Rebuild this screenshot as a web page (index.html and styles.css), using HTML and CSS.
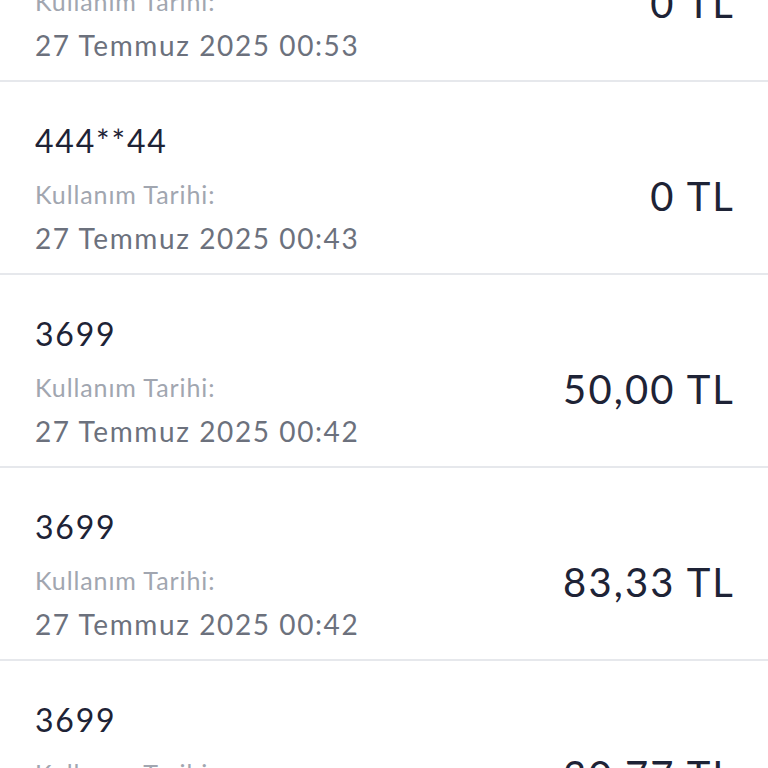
FILE: index.html
```html
<!doctype html>
<html lang="tr">
  <head>
    <meta charset="UTF-8" />
    <meta name="viewport" content="width=device-width, initial-scale=1.0" />
    <title>Kullanım Geçmişi</title>
    <link rel="stylesheet" href="styles.css">
  </head>
  <body>
    <div class="list">
      <div class="row">
        <div class="info">
          <div class="code">3699</div>
          <div class="label">Kullanım Tarihi:</div>
          <div class="date">27 Temmuz 2025 00:53</div>
        </div>
        <div class="amount">0 TL</div>
      </div>

      <div class="row">
        <div class="info">
          <div class="code">444**44</div>
          <div class="label">Kullanım Tarihi:</div>
          <div class="date">27 Temmuz 2025 00:43</div>
        </div>
        <div class="amount">0 TL</div>
      </div>

      <div class="row">
        <div class="info">
          <div class="code">3699</div>
          <div class="label">Kullanım Tarihi:</div>
          <div class="date">27 Temmuz 2025 00:42</div>
        </div>
        <div class="amount">50,00 TL</div>
      </div>

      <div class="row">
        <div class="info">
          <div class="code">3699</div>
          <div class="label">Kullanım Tarihi:</div>
          <div class="date">27 Temmuz 2025 00:42</div>
        </div>
        <div class="amount">83,33 TL</div>
      </div>

      <div class="row">
        <div class="info">
          <div class="code">3699</div>
          <div class="label">Kullanım Tarihi:</div>
          <div class="date">27 Temmuz 2025 00:42</div>
        </div>
        <div class="amount">30,77 TL</div>
      </div>
    </div>
  </body>
</html>
```

FILE: styles.css
```css
* {
  margin: 0;
  padding: 0;
  box-sizing: border-box;
}

body {
  font-family: 'Lato', 'Open Sans', sans-serif;
  background: #ffffff;
  overflow: hidden;
  height: 768px;
}

/* list is scrolled, first row only partly visible */
.list {
  margin-top: -111px;
}

.row {
  display: flex;
  align-items: center;
  justify-content: space-between;
  height: 193px;
  padding: 39px 35px 17px;
  border-bottom: 2px solid #e6e8ec;
}

.info {
  display: flex;
  flex-direction: column;
}

.code {
  font-size: 32px;
  line-height: 40px;
  letter-spacing: 1.8px;
  color: #1e2336;
  margin-bottom: 16px;
}

.label {
  font-size: 25px;
  line-height: 34px;
  letter-spacing: 0.9px;
  color: #a1a6b0;
  margin-bottom: 8px;
}

.date {
  font-size: 28px;
  line-height: 38px;
  letter-spacing: 1.6px;
  color: #6c717d;
}

.amount {
  font-size: 40px;
  line-height: 48px;
  letter-spacing: 2.1px;
  margin-right: -2px;
  color: #1e2336;
  margin-top: 15px;
}
```
